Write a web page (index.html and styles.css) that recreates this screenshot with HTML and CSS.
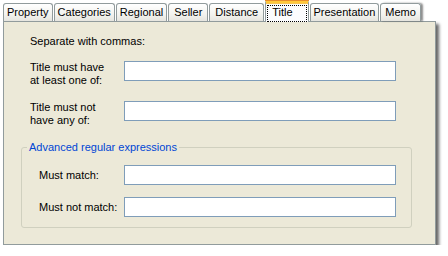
FILE: index.html
```html
<!DOCTYPE html>
<html>
<head>
<meta charset="utf-8">
<link rel="stylesheet" href="styles.css">
</head>
<body>
<div class="window">
  <div class="tabs">
    <div class="tab">Property</div>
    <div class="tab">Categories</div>
    <div class="tab">Regional</div>
    <div class="tab wide">Seller</div>
    <div class="tab wide">Distance</div>
    <div class="tab active"><span class="focus">Title</span></div>
    <div class="tab">Presentation</div>
    <div class="tab last">Memo</div>
  </div>
  <div class="panel">
    <p class="hint">Separate with commas:</p>
    <div class="row">
      <label class="lbl">Title must have<br>at least one of:</label>
      <input class="field" type="text">
    </div>
    <div class="row second">
      <label class="lbl">Title must not<br>have any of:</label>
      <input class="field" type="text">
    </div>
    <fieldset class="group">
      <legend class="legend">Advanced regular expressions</legend>
      <div class="grow">
        <label class="glbl">Must match:</label>
        <input class="field" type="text">
      </div>
      <div class="grow gsecond">
        <label class="glbl">Must not match:</label>
        <input class="field" type="text">
      </div>
    </fieldset>
  </div>
</div>
</body>
</html>
```

FILE: styles.css
```css
html, body {
  margin: 0;
  padding: 0;
  background: #ffffff;
}
body {
  font-family: "Liberation Sans", Arial, sans-serif;
  font-size: 11px;
  line-height: 13px;
  color: #000;
}
.window {
  padding-left: 3px;
  width: 433px;
}
.tabs {
  display: flex;
  align-items: flex-end;
  height: 21px;
  gap: 1px;
  position: relative;
  z-index: 2;
}
.tab {
  box-sizing: border-box;
  height: 18px;
  padding: 2px 3px 0 3px;
  border: 1px solid #919b9c;
  border-bottom: none;
  border-radius: 3px 3px 0 0;
  background: linear-gradient(#ffffff, #f3f3ef 60%, #e6e5df);
  white-space: nowrap;
}
.tab.wide {
  padding: 2px 5px 0 5px;
}
.tab.active {
  height: 22px;
  margin: 0 0 -1px 0;
  padding: 3px 1px 0 1px;
  min-width: 43px;
  border-top: 3px solid #ffc83c;
  box-shadow: inset 0 1px 0 #f5c357;
  background: #fcfcfe;
  border-radius: 2px 2px 0 0;
  position: relative;
}
.tab.active::before {
  content: "";
  position: absolute;
  left: -1px;
  right: -1px;
  top: -3px;
  height: 1px;
  background: #e68b2c;
}
.focus {
  display: block;
  border: 1px dotted #000;
  height: 15px;
  padding: 0 13px 0 4px;
  line-height: 13px;
  margin-top: -1px;
}
.tab.last {
  padding: 2px 4px 0 4px;
  box-shadow: 2px 0 2px rgba(0, 0, 0, 0.45);
}
.panel {
  box-sizing: border-box;
  width: 433px;
  height: 224px;
  border: 1px solid #919b9c;
  background: #ece9d8;
  box-shadow: 3px 3px 3px rgba(0, 0, 0, 0.6);
  padding: 13px 0 0 17px;
  position: relative;
  z-index: 1;
}
.hint {
  margin: 0 0 0 9px;
}
.row {
  display: flex;
  align-items: flex-start;
  margin: 13px 0 0 9px;
}
.row.second {
  margin-top: 14px;
}
.lbl {
  width: 94px;
  flex: none;
}
.field {
  box-sizing: border-box;
  width: 272px;
  height: 20px;
  margin: 0;
  border: 1px solid #7f9db9;
  background: #fff;
  padding: 0 2px;
  font: inherit;
  outline: none;
}
.group {
  box-sizing: border-box;
  width: 391px;
  margin: 14px 0 0 0;
  padding: 11px 0 10px 0;
  border: 1px solid #d0d0bf;
  border-radius: 3px;
  min-width: 0;
}
.legend {
  color: #0046d5;
  padding: 0 2px;
  margin-left: 5px;
  line-height: 13px;
}
.grow {
  display: flex;
  align-items: center;
  padding-left: 17px;
}
.grow.gsecond {
  margin-top: 12px;
}
.glbl {
  width: 85px;
  flex: none;
}
```
